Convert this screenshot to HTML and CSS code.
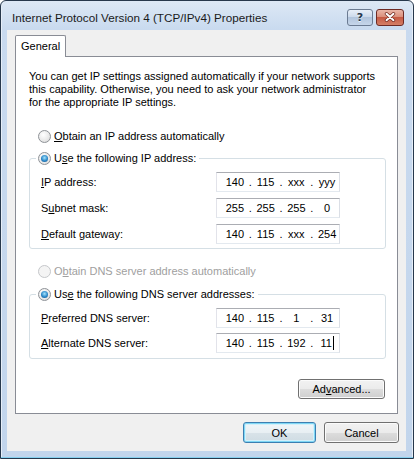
FILE: index.html
```html
<!DOCTYPE html>
<html lang="en">
  <head>
    <meta charset="UTF-8" />
    <meta name="viewport" content="width=device-width, initial-scale=1.0" />
    <title>Internet Protocol Version 4 (TCP/IPv4) Properties</title>
    <link rel="stylesheet" href="styles.css">
  </head>
  <body>
    <div class="window">
      <div class="titlebar">
        <span class="title">Internet Protocol Version 4 (TCP/IPv4) Properties</span>
        <div class="caption-buttons">
          <span class="cap-btn help">?</span>
          <span class="cap-btn close">
            <svg width="12" height="10" viewBox="0 0 12 10">
              <path d="M2.5 1.8 L9.5 8.2 M9.5 1.8 L2.5 8.2" stroke="#6e2a22" stroke-width="3.4" stroke-linecap="round" />
              <path d="M2.5 1.8 L9.5 8.2 M9.5 1.8 L2.5 8.2" stroke="#fff" stroke-width="2" stroke-linecap="round" />
            </svg>
          </span>
        </div>
      </div>

      <div class="client">
        <div class="tabs"><span class="tab">General</span></div>

        <div class="panel">
          <p class="intro">You can get IP settings assigned automatically if your network supports<br />this capability. Otherwise, you need to ask your network administrator<br />for the appropriate IP settings.</p>

          <div class="radio first"><span class="mark"></span><span><u>O</u>btain an IP address automatically</span></div>

          <fieldset class="group">
            <legend><span class="radio checked"><span class="mark"></span><span>U<u>s</u>e the following IP address:</span></span></legend>
            <div class="fields">
              <span><u>I</u>P address:</span>
              <div class="ip"><span class="octet">140</span><span class="dot">.</span><span class="octet">115</span><span class="dot">.</span><span class="octet">xxx</span><span class="dot">.</span><span class="octet">yyy</span></div>
              <span>S<u>u</u>bnet mask:</span>
              <div class="ip"><span class="octet">255</span><span class="dot">.</span><span class="octet">255</span><span class="dot">.</span><span class="octet">255</span><span class="dot">.</span><span class="octet">0</span></div>
              <span><u>D</u>efault gateway:</span>
              <div class="ip"><span class="octet">140</span><span class="dot">.</span><span class="octet">115</span><span class="dot">.</span><span class="octet">xxx</span><span class="dot">.</span><span class="octet">254</span></div>
            </div>
          </fieldset>

          <div class="radio disabled dns-auto"><span class="mark"></span><span>O<u>b</u>tain DNS server address automatically</span></div>

          <fieldset class="group dns">
            <legend><span class="radio checked"><span class="mark"></span><span>Us<u>e</u> the following DNS server addresses:</span></span></legend>
            <div class="fields">
              <span><u>P</u>referred DNS server:</span>
              <div class="ip"><span class="octet">140</span><span class="dot">.</span><span class="octet">115</span><span class="dot">.</span><span class="octet">1</span><span class="dot">.</span><span class="octet">31</span></div>
              <span><u>A</u>lternate DNS server:</span>
              <div class="ip"><span class="octet">140</span><span class="dot">.</span><span class="octet">115</span><span class="dot">.</span><span class="octet">192</span><span class="dot">.</span><span class="octet">11<span class="caret"></span></span></div>
            </div>
          </fieldset>

          <button class="btn advanced" type="button">Ad<u>v</u>anced...</button>
        </div>

        <div class="actions">
          <button class="btn ok" type="button">OK</button>
          <button class="btn cancel" type="button">Cancel</button>
        </div>
      </div>
    </div>
  </body>
</html>
```

FILE: styles.css
```css
body {
  margin: 0;
  font-family: "Liberation Sans", Arial, sans-serif;
  font-size: 11px;
  color: #000;
}
.window {
  box-sizing: border-box;
  width: 414px;
  height: 459px;
  border: 1px solid #27384c;
  border-radius: 6px 6px 0 0;
  background: linear-gradient(#dde8f5, #c9daef 28px, #c2d5ec);
  box-shadow: inset 0 -1px 0 #86d0ef, inset 1px 0 0 #e6eef8, inset -1px 0 0 #e6eef8;
  display: flex;
  flex-direction: column;
}
.titlebar {
  box-sizing: border-box;
  height: 29px;
  padding: 3px 9px 0 11px;
  display: flex;
  align-items: center;
  justify-content: space-between;
}
.title {
  font-size: 11.7px;
  color: #1a1a1a;
}
.caption-buttons {
  display: flex;
  gap: 3px;
}
.cap-btn {
  box-sizing: border-box;
  height: 17px;
  border: 1px solid #6b7b92;
  border-radius: 3px;
  display: flex;
  align-items: center;
  justify-content: center;
}
.help {
  width: 26px;
  background: linear-gradient(#e8eff8, #cad8ea 50%, #b2c5dd 50%, #c6d6ea);
  font-family: "DejaVu Sans", sans-serif;
  font-weight: bold;
  font-size: 11px;
  color: #26384f;
  text-shadow: 0 1px 0 #eef4fb;
}
.close {
  width: 28px;
  border-color: #6d2a24;
  background: linear-gradient(#eab5a7, #d98c78 50%, #c65a44 50%, #d47f66);
}
.client {
  flex: 1;
  margin: 0 7px 7px 6px;
  padding: 5px 8px 8px 8px;
  background: #f0f0f0;
  display: flex;
  flex-direction: column;
}
.tabs {
  display: flex;
}
.tab {
  position: relative;
  z-index: 1;
  height: 20px;
  line-height: 20px;
  padding: 0 5px 1px;
  margin-bottom: -1px;
  background: #fff;
  border: 1px solid #898c95;
  border-bottom: 0;
  border-radius: 2px 2px 0 0;
}
.panel {
  flex: 1;
  border: 1px solid #898c95;
  background: #fff;
  padding: 13px 11px 14px 13px;
  display: flex;
  flex-direction: column;
}
.intro {
  margin: 0;
  line-height: 13px;
}
.radio {
  display: flex;
  align-items: center;
  gap: 3px;
  height: 16px;
}
.radio.first {
  margin: 19px 0 0 9px;
}
.radio.dns-auto {
  margin: 14px 0 0 9px;
}
.mark {
  position: relative;
  box-sizing: border-box;
  width: 13px;
  height: 13px;
  border-radius: 50%;
  border: 1px solid #8e9297;
  background: radial-gradient(circle at 40% 35%, #fff, #e6e6e6 65%, #d0d0d0);
}
.checked .mark::after {
  content: "";
  position: absolute;
  left: 2px;
  top: 2px;
  width: 7px;
  height: 7px;
  border-radius: 50%;
  background: radial-gradient(circle at 50% 40%, #a6e4fc, #2b88c9 55%, #0f4a80);
}
.disabled {
  color: #a0a0a0;
}
.disabled .mark {
  border-color: #c5c7ca;
  background: #f4f4f4;
}
.group {
  margin: 6px 0 0;
  padding: 6px 11px 4px;
  border: 1px solid #d5dfe5;
  border-radius: 3px;
  min-width: 0;
}
.group.dns {
  margin-top: 7px;
  padding-bottom: 5px;
}
.group legend {
  padding: 0 3px 0 2px;
  margin-left: -5px;
}
.fields {
  display: grid;
  grid-template-columns: 175px 124px;
  row-gap: 6px;
  align-items: center;
}
.dns .fields {
  row-gap: 5px;
}
.ip {
  box-sizing: border-box;
  height: 20px;
  padding-left: 6px;
  border: 1px solid;
  border-color: #abadb3 #dbdfe6 #e3e9ef #e2e3ea;
  display: flex;
  align-items: center;
}
.octet {
  width: 24px;
  text-align: center;
}
.dot {
  width: 7px;
  text-align: center;
}
.caret {
  display: inline-block;
  width: 0;
  height: 14px;
  margin-left: 1px;
  border-left: 1px solid #000;
  vertical-align: -3px;
}
.btn {
  box-sizing: border-box;
  height: 21px;
  padding: 0;
  border: 1px solid #707070;
  border-radius: 3px;
  background: linear-gradient(#f2f2f2, #ebebeb 50%, #dddddd 50%, #cfcfcf);
  box-shadow: inset 0 0 0 1px #fbfbfb;
  font: inherit;
  color: #000;
}
.advanced {
  align-self: flex-end;
  width: 87px;
  height: 20px;
  margin: 20px 1px 0 0;
}
.actions {
  display: flex;
  justify-content: flex-end;
  gap: 8px;
  margin: 8px -1px 0 0;
}
.ok {
  width: 73px;
  border-color: #3c7fb1;
  box-shadow: inset 0 0 0 1px #7fd7f5, inset 0 0 0 2px #d3f0fa;
  background: linear-gradient(#f1f6f9, #e8eff3 50%, #d9e3e9 50%, #cfdce3);
}
.cancel {
  width: 75px;
}
```
